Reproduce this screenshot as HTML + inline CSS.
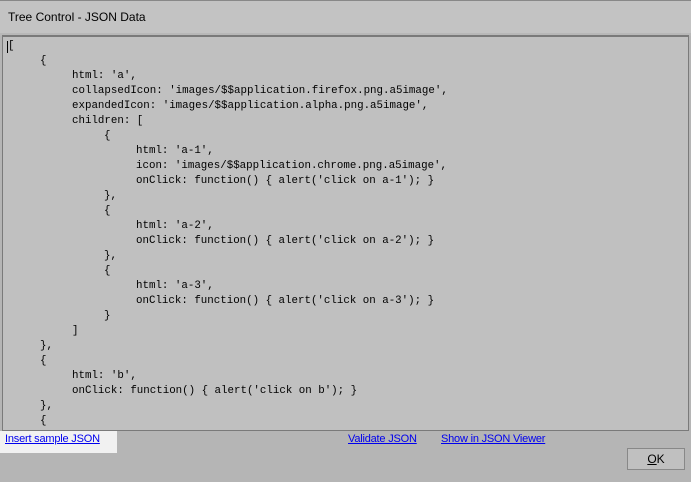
<html><head><style>
body{margin:0;width:691px;height:482px;background:#b5b5b5;font-family:"Liberation Sans",sans-serif;position:relative;overflow:hidden}
.top{position:absolute;left:0;top:0;width:691px;height:1px;background:#888}
.title{position:absolute;left:0;top:1px;width:691px;height:32px;background:#c3c3c3;font-size:12px;color:#000}
.title span{position:absolute;left:8px;top:9px}
.band{position:absolute;left:0;top:33px;width:691px;height:3px;background:#b8b8b8}
.ta{position:absolute;left:2px;top:35px;width:685px;height:393px;background:#c0c0c0;border:1px solid #7a7a7a;border-top:2px solid #7a7a7a;overflow:hidden}
pre{margin:0;position:absolute;left:5px;top:2px;font-family:"Liberation Mono",monospace;font-size:10.8px;line-height:15px;color:#000;tab-size:32px}
.caret{position:absolute;left:4px;top:4px;width:1px;height:12px;background:#000}
.ins{position:absolute;left:0;top:431px;width:117px;height:22px;background:#f1f1f1}
a{position:absolute;font-size:11px;color:#00e;text-decoration:underline;top:433px;letter-spacing:-0.2px}
.ok{position:absolute;left:627px;top:448px;width:56px;height:20px;border:1px solid #888;background:#c0c0c0;font-size:12px;text-align:center;line-height:20px}
</style></head><body>
<div class="top"></div>
<div class="title"><span>Tree Control - JSON Data</span></div>
<div class="band"></div>
<div class="ta"><div class="caret"></div><pre>[
	{
		html: 'a',
		collapsedIcon: 'images/$$application.firefox.png.a5image',
		expandedIcon: 'images/$$application.alpha.png.a5image',
		children: [
			{
				html: 'a-1',
				icon: 'images/$$application.chrome.png.a5image',
				onClick: function() { alert('click on a-1'); }
			},
			{
				html: 'a-2',
				onClick: function() { alert('click on a-2'); }
			},
			{
				html: 'a-3',
				onClick: function() { alert('click on a-3'); }
			}
		]
	},
	{
		html: 'b',
		onClick: function() { alert('click on b'); }
	},
	{</pre></div>
<div class="ins"></div>
<a style="left:5px">Insert sample JSON</a>
<a style="left:348px">Validate JSON</a>
<a style="left:441px">Show in JSON Viewer</a>
<div class="ok"><u>O</u>K</div>
</body></html>
